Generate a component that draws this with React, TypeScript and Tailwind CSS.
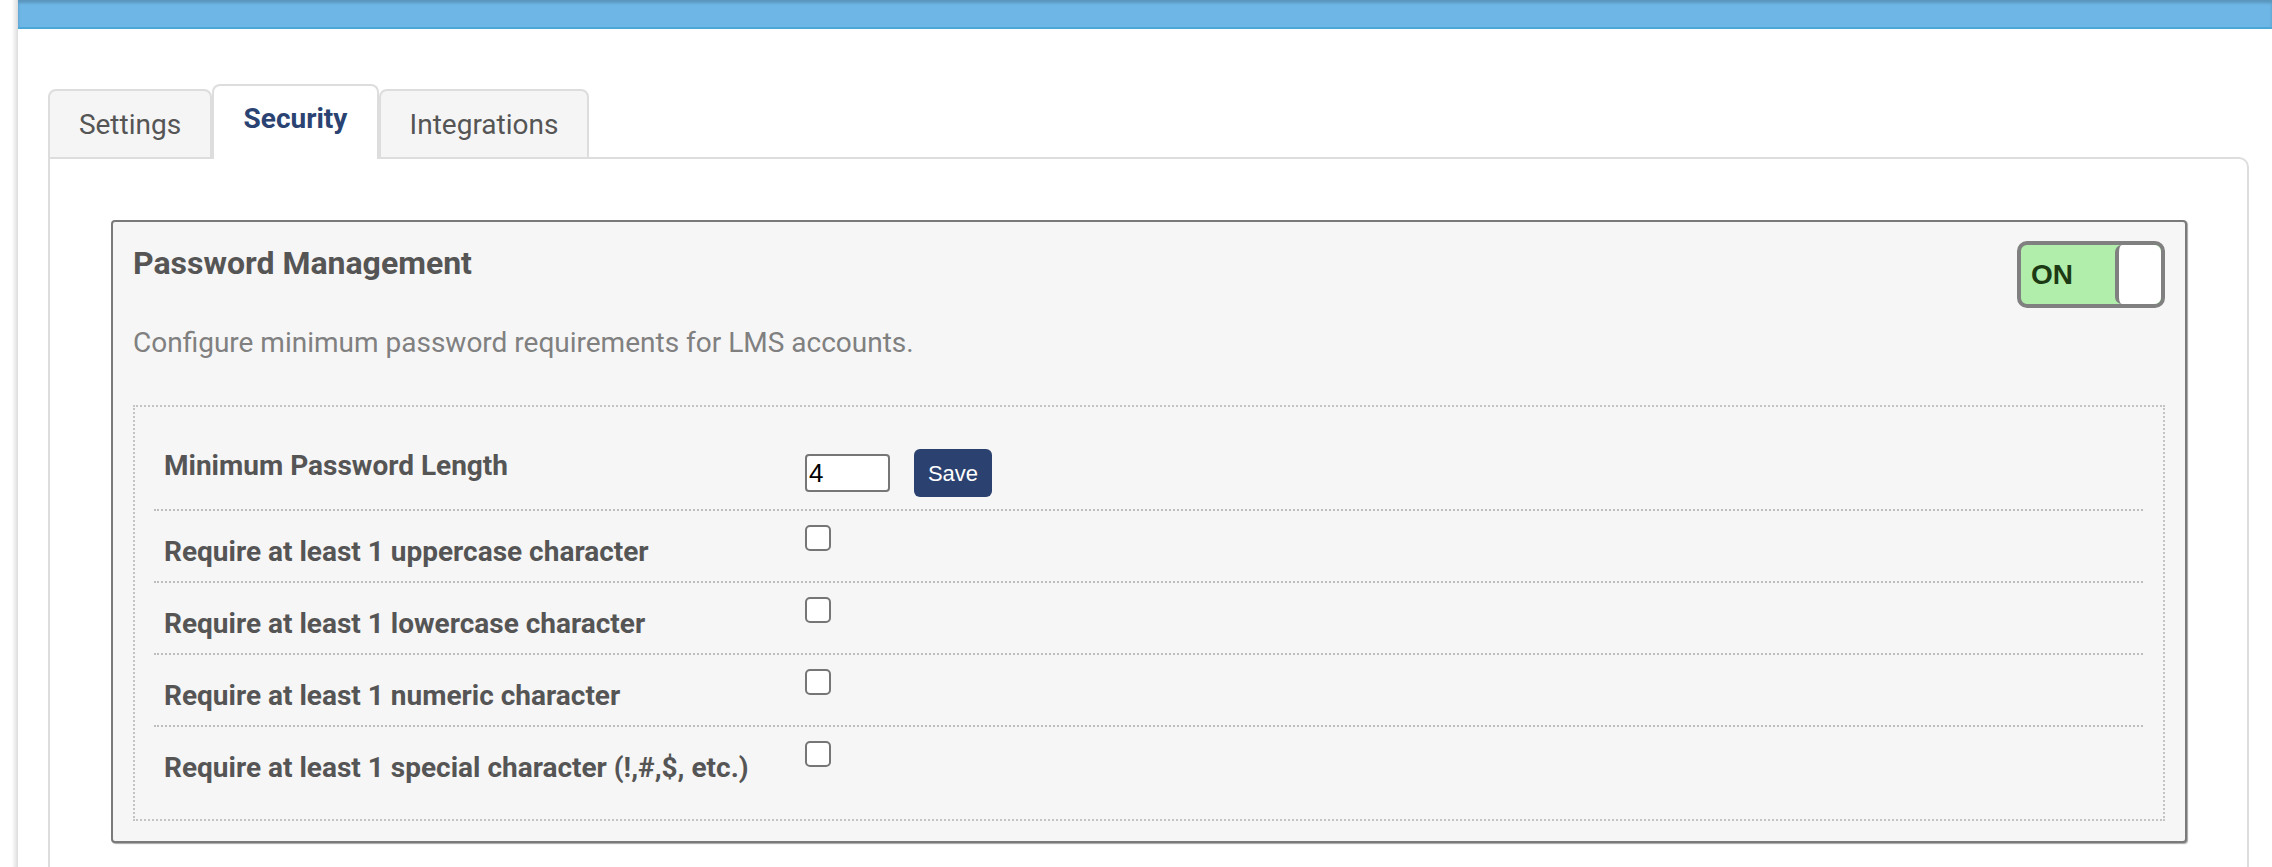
import React from 'react';

const rules = [
  'Require at least 1 uppercase character',
  'Require at least 1 lowercase character',
  'Require at least 1 numeric character',
  'Require at least 1 special character (!,#,$, etc.)',
];

function Toggle() {
  return (
    <div className="flex h-[67px] w-[148px] items-stretch rounded-[10px] border-4 border-[#808080] bg-[#b1eeab]">
      <span className="flex flex-1 items-center pl-[10px] font-['Liberation_Sans',Arial,sans-serif] text-[28px] font-bold text-[#1c3a13]">
        ON
      </span>
      <span className="w-[46px] rounded-[7px] border-l-4 border-[#808080] bg-white" />
    </div>
  );
}

function Checkbox() {
  return (
    <input
      type="checkbox"
      className="h-[26px] w-[26px] appearance-none rounded-[5px] border-2 border-[#767676] bg-white"
    />
  );
}

export default function App() {
  return (
    <div className="flex min-h-[867px] bg-white font-['Roboto',sans-serif]">
      {/* left edge strip */}
      <div className="w-[18px] shrink-0 bg-[linear-gradient(to_right,#ffffff_65%,#dcdcdc)]" />

      <div className="flex flex-1 flex-col">
        {/* top bar */}
        <div className="h-[29px] border-b-2 border-[#4aa8d8] bg-[#6db6e6] shadow-[inset_0_3px_3px_rgba(0,0,0,0.18)]" />

        <div className="flex flex-1 flex-col pl-[30px] pr-[23px] pt-[55px]">
          {/* tabs */}
          <div className="relative z-10 -mb-[2px] flex items-end">
            <div className="h-[70px] w-[164px] rounded-t-[8px] border-2 border-[#dddddd] bg-[#f5f5f5] pt-[16px] text-center text-[28px] leading-[36px] text-[#555555]">
              Settings
            </div>
            <div className="h-[75px] w-[167px] rounded-t-[8px] border-2 border-b-0 border-[#dddddd] bg-white pt-[15px] text-center text-[28px] font-bold leading-[36px] text-[#2a4373]">
              Security
            </div>
            <div className="h-[70px] w-[210px] rounded-t-[8px] border-2 border-[#dddddd] bg-[#f5f5f5] pt-[16px] text-center text-[28px] leading-[36px] text-[#555555]">
              Integrations
            </div>
          </div>

          {/* panel */}
          <div className="flex-1 rounded-tr-[10px] border-2 border-b-0 border-[#dddddd] pl-[61px] pr-[60px] pt-[61px]">
            <div className="rounded-[4px] border-2 border-[#7a7a7a] bg-[#f6f6f6] px-[20px] pb-[20px] pt-[19px] shadow-[1px_1px_1px_rgba(0,0,0,0.35)]">
              <div className="flex items-start justify-between">
                <h2 className="pt-[4px] text-[32px] font-bold leading-[36px] text-[#555555]">
                  Password Management
                </h2>
                <Toggle />
              </div>
              <p className="mt-[16px] text-[28px] leading-[38px] text-[#808080]">
                Configure minimum password requirements for LMS accounts.
              </p>

              <div className="mt-[43px] border-2 border-dotted border-[#c4c4c4] pl-[19px] pr-[20px]">
                <div className="flex h-[104px] border-b-2 border-dotted border-[#bdbdbd]">
                  <div className="w-[651px] pl-[10px] pt-[40px] text-[28px] font-bold leading-[38px] text-[#555555]">
                    Minimum Password Length
                  </div>
                  <div className="flex items-center self-start pt-[42px]">
                    <input
                      type="text"
                      readOnly
                      defaultValue="4"
                      className="h-[38px] w-[85px] rounded-[4px] border-2 border-[#767676] bg-white pl-[2px] font-['Liberation_Sans',Arial,sans-serif] text-[26px] text-black outline-none"
                    />
                    <button className="ml-[24px] h-[48px] w-[78px] rounded-[6px] bg-[#2b4270] font-['Liberation_Sans',Arial,sans-serif] text-[22px] text-white">
                      Save
                    </button>
                  </div>
                </div>

                {rules.map((rule, i) => (
                  <div
                    key={rule}
                    className={
                      i < rules.length - 1
                        ? 'flex h-[72px] border-b-2 border-dotted border-[#bdbdbd]'
                        : 'flex h-[92px]'
                    }
                  >
                    <div className="w-[651px] pl-[10px] pt-[22px] text-[28px] font-bold leading-[38px] text-[#555555]">
                      {rule}
                    </div>
                    <div className="pt-[14px]">
                      <Checkbox />
                    </div>
                  </div>
                ))}
              </div>
            </div>
          </div>
        </div>
      </div>
    </div>
  );
}
